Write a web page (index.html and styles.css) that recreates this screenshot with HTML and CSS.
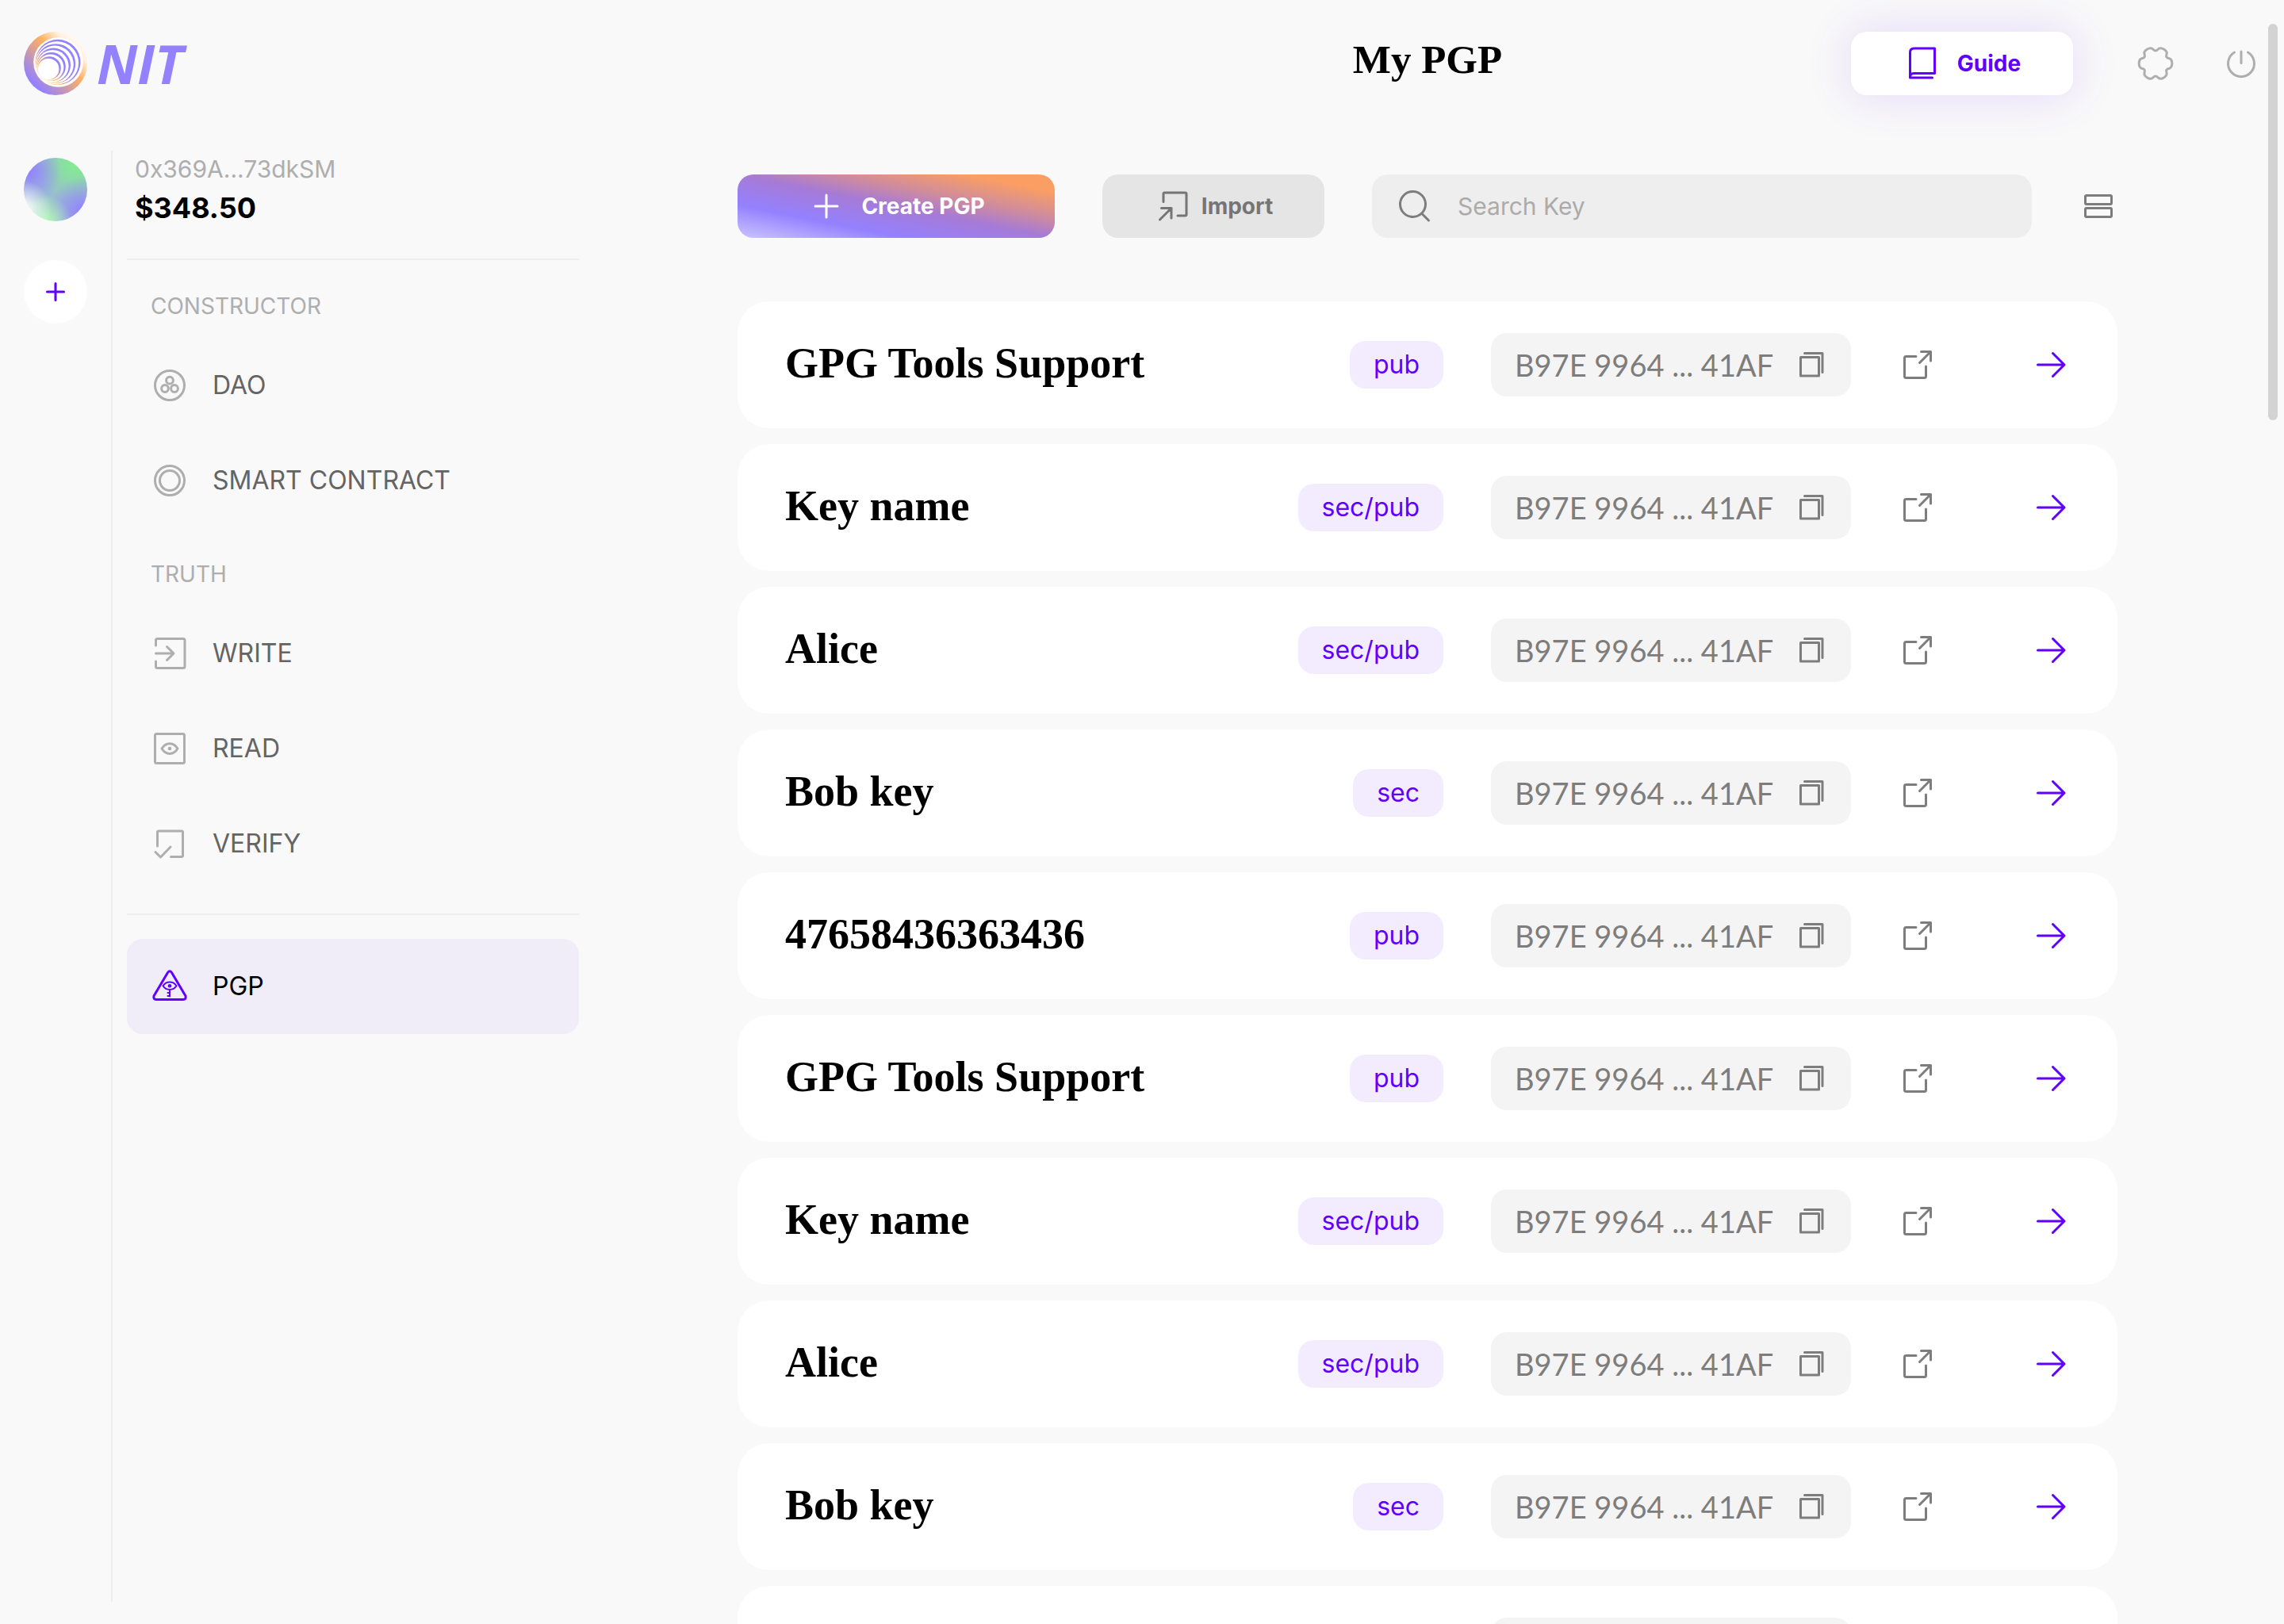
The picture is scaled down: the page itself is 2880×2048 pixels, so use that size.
FILE: index.html
```html
<!DOCTYPE html>
<html lang="en">
<head>
<meta charset="utf-8">
<meta name="viewport" content="width=device-width, initial-scale=1">
<title>My PGP</title>
<link rel="stylesheet" href="styles.css">
</head>
<body>
<svg class="sprite" aria-hidden="true">
  <symbol id="i-copy" viewBox="0 0 40 40"><path d="M6.500 10.500H29.500V34H6.500ZM11.500 5.500H34V29.500"/></symbol>
  <symbol id="i-open" viewBox="0 0 48 48"><path d="M22 13.500H9.500q-2 0-2 2V38.500q0 2 2 2H32.500q2 0 2-2V26M26.500 21.500L40.500 7.500M28.500 7.500H40.500V19"/></symbol>
  <symbol id="i-go" viewBox="0 0 48 48"><path d="M7.500 24H41M26.500 9.500L41 24L26.500 38.500"/></symbol>
</svg>
<div class="app">
  <header class="header">
    <a class="logo" href="#" aria-label="NIT home">
      <svg class="logo-mark" viewBox="0 0 80 80" aria-hidden="true">
        <defs>
          <linearGradient id="g-out" gradientUnits="userSpaceOnUse" x1="0" y1="80" x2="80" y2="0">
            <stop offset=".17" stop-color="#9381ff"/><stop offset=".58" stop-color="#ffb05f"/><stop offset=".76" stop-color="#fff1e2"/><stop offset=".85" stop-color="#fff8f1"/>
          </linearGradient>
          <linearGradient id="g-in" gradientUnits="userSpaceOnUse" x1="14" y1="66" x2="66" y2="14">
            <stop offset=".08" stop-color="#fff"/><stop offset=".28" stop-color="#ffb05f"/><stop offset=".52" stop-color="#9381ff"/>
          </linearGradient>
        </defs>
        <circle cx="40" cy="40" r="40" fill="url(#g-out)"/>
        <circle cx="43.500" cy="38.500" r="31.300" fill="#fff"/>
        <circle cx="43" cy="38.300" r="28.500" fill="url(#g-in)"/>
        <circle cx="42" cy="39.300" r="27.100" fill="#fff"/>
        <circle cx="40.200" cy="40.200" r="25" fill="url(#g-in)"/>
        <circle cx="39.200" cy="41.200" r="23.600" fill="#fff"/>
        <circle cx="37.500" cy="42.100" r="21.500" fill="url(#g-in)"/>
        <circle cx="36.500" cy="43.100" r="20.100" fill="#fff"/>
        <circle cx="34.800" cy="44" r="18" fill="url(#g-in)"/>
        <circle cx="33.800" cy="45" r="16.600" fill="#fff"/>
        <circle cx="32.200" cy="45.900" r="14.600" fill="url(#g-in)"/>
        <circle cx="31.200" cy="46.900" r="13.200" fill="#fff"/>
      </svg>
      <span class="logo-name">NIT</span>
    </a>
    <h1 class="title">My PGP</h1>
    <div class="actions">
      <button class="btn btn-guide" type="button">
        <svg class="icon" viewBox="0 0 48 48" aria-hidden="true"><path d="M8.500 42V10q0-5 5-5H39.500V36.500H13q-4.500 0-4.500 5M8.500 42H36.500"/></svg>
        Guide
      </button>
      <div class="tools">
        <button class="icon-btn muted" type="button" aria-label="Settings">
          <svg class="icon" viewBox="-24 -24 48 48" aria-hidden="true"><path d="M20.800 0Q20.800 5.600 16.700 6.500Q12.600 7.300 13.900 11.300Q15.200 15.200 10.400 18Q5.600 20.800 2.800 17.600Q0 14.500-2.800 17.600Q-5.600 20.800-10.400 18Q-15.200 15.200-13.900 11.300Q-12.600 7.300-16.700 6.500Q-20.800 5.600-20.800 0Q-20.800-5.600-16.700-6.500Q-12.600-7.300-13.900-11.300Q-15.200-15.200-10.400-18Q-5.600-20.800-2.800-17.600Q0-14.500 2.800-17.600Q5.600-20.800 10.400-18Q15.200-15.200 13.900-11.300Q12.600-7.300 16.700-6.500Q20.800-5.600 20.800 0Z"/></svg>
        </button>
        <button class="icon-btn muted" type="button" aria-label="Log out">
          <svg class="icon" viewBox="0 0 48 48" aria-hidden="true"><path d="M15.500 10A16.500 16.500 0 1 0 32.500 10M24 9V23.500"/></svg>
        </button>
      </div>
    </div>
  </header>

  <div class="body">
    <aside class="rail">
      <button class="avatar" type="button" aria-label="Current wallet"></button>
      <button class="add" type="button" aria-label="Add wallet">
        <svg class="icon" viewBox="0 0 48 48" aria-hidden="true"><path d="M24 13.500V34.500M13.500 24H34.500"/></svg>
      </button>
    </aside>

    <nav class="side" aria-label="Main">
      <div class="account">
        <div class="address">0x369A...73dkSM</div>
        <div class="balance">$348.50</div>
      </div>
      <section class="group">
        <h2 class="group-title">CONSTRUCTOR</h2>
        <a class="nav-item" href="#"><svg class="icon" viewBox="0 0 48 48" aria-hidden="true"><circle cx="24" cy="24" r="18.500"/><circle cx="24" cy="17.700" r="4.400"/><circle cx="18" cy="28" r="4.400"/><circle cx="30" cy="28" r="4.400"/></svg>DAO</a>
        <a class="nav-item" href="#"><svg class="icon" viewBox="0 0 48 48" aria-hidden="true"><circle cx="24" cy="24" r="18.500"/><circle cx="24" cy="24" r="12.500"/></svg>SMART CONTRACT</a>
      </section>
      <section class="group">
        <h2 class="group-title">TRUTH</h2>
        <a class="nav-item" href="#"><svg class="icon" viewBox="0 0 48 48" aria-hidden="true"><path d="M6.500 14V7.500q0-2 2-2H41q2 0 2 2V40.500q0 2-2 2H8.500q-2 0-2-2V34M6.500 24H28.500M20.500 15.500L29 24L20.500 32.500"/></svg>WRITE</a>
        <a class="nav-item" href="#"><svg class="icon" viewBox="0 0 48 48" aria-hidden="true"><rect x="5.500" y="5.500" width="37" height="37" rx="2"/><path d="M14 24C19 15.500 29 15.500 34 24C29 32.500 19 32.500 14 24Z"/><circle class="dot" cx="24" cy="24" r="2.300"/></svg>READ</a>
        <a class="nav-item" href="#"><svg class="icon" viewBox="0 0 48 48" aria-hidden="true"><path d="M8.500 27V9.500q0-1.500 1.500-1.500H39q1.500 0 1.500 1.500V39q0 1.500-1.500 1.500H25.500M6 34.500L12.500 41L25 28"/></svg>VERIFY</a>
      </section>
      <section class="group-last">
        <a class="nav-item active" href="#" aria-current="page"><svg class="icon" viewBox="0 0 48 48" aria-hidden="true"><path d="M21.500 6.500Q24 3 26.500 6.500L44 36Q45 40.500 41 40.500H7Q3 40.500 4 36Z"/><path class="thin" d="M15.500 23.300C19.500 17 28.500 17 32.500 23.300C28.500 29.600 19.500 29.600 15.500 23.300ZM24 28.500V36.500M24 32H21.500M24 36H21.500"/><circle class="dot" cx="24" cy="23.300" r="2.300"/></svg>PGP</a>
      </section>
    </nav>

    <main class="main">
      <div class="toolbar">
        <button class="btn btn-create" type="button">
          <svg class="icon" viewBox="0 0 48 48" aria-hidden="true"><path d="M24 10V38M10 24H38"/></svg>
          Create PGP
        </button>
        <button class="btn btn-import" type="button">
          <svg class="icon" viewBox="0 0 48 48" aria-hidden="true"><path d="M12 18.500V8.500q0-1.500 1.500-1.500H39.500q1.500 0 1.500 1.500V34.500q0 1.500-1.500 1.500H30M7.500 41L22 26.500M9.500 26.500H22V39"/></svg>
          Import
        </button>
        <label class="search">
          <svg class="icon" viewBox="0 0 48 48" aria-hidden="true"><circle cx="21.500" cy="21.500" r="16"/><path d="M33.500 34L41.500 42"/></svg>
          <input class="search-input" type="search" placeholder="Search Key" aria-label="Search Key">
        </label>
        <button class="icon-btn" type="button" aria-label="Change view">
          <svg class="icon" viewBox="0 0 48 48" aria-hidden="true"><rect x="7.500" y="10.500" width="33" height="11" rx="1.500"/><rect x="7.500" y="26.500" width="33" height="11" rx="1.500"/></svg>
        </button>
      </div>

      <ul class="keys">
        <li class="key"><h3 class="key-name">GPG Tools Support</h3><span class="tag">pub</span><button class="print" type="button">B97E 9964 ... 41AF<svg class="icon-sm" aria-hidden="true"><use href="#i-copy"/></svg></button><a class="open" href="#" aria-label="Open key"><svg class="icon" aria-hidden="true"><use href="#i-open"/></svg></a><a class="go" href="#" aria-label="Details"><svg class="icon" aria-hidden="true"><use href="#i-go"/></svg></a></li>
        <li class="key"><h3 class="key-name">Key name</h3><span class="tag">sec/pub</span><button class="print" type="button">B97E 9964 ... 41AF<svg class="icon-sm" aria-hidden="true"><use href="#i-copy"/></svg></button><a class="open" href="#" aria-label="Open key"><svg class="icon" aria-hidden="true"><use href="#i-open"/></svg></a><a class="go" href="#" aria-label="Details"><svg class="icon" aria-hidden="true"><use href="#i-go"/></svg></a></li>
        <li class="key"><h3 class="key-name">Alice</h3><span class="tag">sec/pub</span><button class="print" type="button">B97E 9964 ... 41AF<svg class="icon-sm" aria-hidden="true"><use href="#i-copy"/></svg></button><a class="open" href="#" aria-label="Open key"><svg class="icon" aria-hidden="true"><use href="#i-open"/></svg></a><a class="go" href="#" aria-label="Details"><svg class="icon" aria-hidden="true"><use href="#i-go"/></svg></a></li>
        <li class="key"><h3 class="key-name">Bob key</h3><span class="tag">sec</span><button class="print" type="button">B97E 9964 ... 41AF<svg class="icon-sm" aria-hidden="true"><use href="#i-copy"/></svg></button><a class="open" href="#" aria-label="Open key"><svg class="icon" aria-hidden="true"><use href="#i-open"/></svg></a><a class="go" href="#" aria-label="Details"><svg class="icon" aria-hidden="true"><use href="#i-go"/></svg></a></li>
        <li class="key"><h3 class="key-name">47658436363436</h3><span class="tag">pub</span><button class="print" type="button">B97E 9964 ... 41AF<svg class="icon-sm" aria-hidden="true"><use href="#i-copy"/></svg></button><a class="open" href="#" aria-label="Open key"><svg class="icon" aria-hidden="true"><use href="#i-open"/></svg></a><a class="go" href="#" aria-label="Details"><svg class="icon" aria-hidden="true"><use href="#i-go"/></svg></a></li>
        <li class="key"><h3 class="key-name">GPG Tools Support</h3><span class="tag">pub</span><button class="print" type="button">B97E 9964 ... 41AF<svg class="icon-sm" aria-hidden="true"><use href="#i-copy"/></svg></button><a class="open" href="#" aria-label="Open key"><svg class="icon" aria-hidden="true"><use href="#i-open"/></svg></a><a class="go" href="#" aria-label="Details"><svg class="icon" aria-hidden="true"><use href="#i-go"/></svg></a></li>
        <li class="key"><h3 class="key-name">Key name</h3><span class="tag">sec/pub</span><button class="print" type="button">B97E 9964 ... 41AF<svg class="icon-sm" aria-hidden="true"><use href="#i-copy"/></svg></button><a class="open" href="#" aria-label="Open key"><svg class="icon" aria-hidden="true"><use href="#i-open"/></svg></a><a class="go" href="#" aria-label="Details"><svg class="icon" aria-hidden="true"><use href="#i-go"/></svg></a></li>
        <li class="key"><h3 class="key-name">Alice</h3><span class="tag">sec/pub</span><button class="print" type="button">B97E 9964 ... 41AF<svg class="icon-sm" aria-hidden="true"><use href="#i-copy"/></svg></button><a class="open" href="#" aria-label="Open key"><svg class="icon" aria-hidden="true"><use href="#i-open"/></svg></a><a class="go" href="#" aria-label="Details"><svg class="icon" aria-hidden="true"><use href="#i-go"/></svg></a></li>
        <li class="key"><h3 class="key-name">Bob key</h3><span class="tag">sec</span><button class="print" type="button">B97E 9964 ... 41AF<svg class="icon-sm" aria-hidden="true"><use href="#i-copy"/></svg></button><a class="open" href="#" aria-label="Open key"><svg class="icon" aria-hidden="true"><use href="#i-open"/></svg></a><a class="go" href="#" aria-label="Details"><svg class="icon" aria-hidden="true"><use href="#i-go"/></svg></a></li>
        <li class="key"><h3 class="key-name">47658436363436</h3><span class="tag">pub</span><button class="print" type="button">B97E 9964 ... 41AF<svg class="icon-sm" aria-hidden="true"><use href="#i-copy"/></svg></button><a class="open" href="#" aria-label="Open key"><svg class="icon" aria-hidden="true"><use href="#i-open"/></svg></a><a class="go" href="#" aria-label="Details"><svg class="icon" aria-hidden="true"><use href="#i-go"/></svg></a></li>
      </ul>
    </main>
  </div>
</div>
<div class="scroll-thumb" aria-hidden="true"></div>
</body>
</html>
```
FILE: styles.css
```css
:root {
  --bg: #f9f9f9;
  --violet: #6100ff;
  --grey: #7d7d7d;
  --light: #aeaeae;
  --line: #eeeeee;
  --sans: Inter, "Liberation Sans", sans-serif;
  --serif: "Liberation Serif", serif;
}

* { box-sizing: border-box; }

body {
  margin: 0;
  background: var(--bg);
  color: #000;
  font: 400 32px/40px var(--sans);
}

h1, h2, h3, ul { margin: 0; padding: 0; }
a { color: inherit; text-decoration: none; }

button {
  border: 0;
  padding: 0;
  background: none;
  color: inherit;
  font: inherit;
  cursor: pointer;
}

.sprite { display: none; }

.icon, .icon-sm {
  flex: none;
  display: block;
  width: 48px;
  height: 48px;
  fill: none;
  stroke: currentColor;
  stroke-width: 3;
  stroke-linecap: round;
  stroke-linejoin: round;
}
.icon-sm { width: 40px; height: 40px; }
.icon .dot { fill: currentColor; stroke: none; }
.icon .thin { stroke-width: 2; }

.app {
  display: flex;
  flex-direction: column;
  height: 100vh;
}

/* header */
.header {
  flex: none;
  display: grid;
  grid-template-columns: 730px 1fr auto 1fr;
  align-items: center;
  height: 160px;
  padding-right: 10px;
}

.logo {
  display: flex;
  align-items: center;
  gap: 12px;
  padding-left: 30px;
}
.logo-mark { width: 80px; height: 80px; }
.logo-name {
  color: #9381ff;
  font: italic 700 68px/80px "Open Sans", sans-serif;
}

.title {
  grid-column: 3;
  padding-bottom: 10px;
  font: 700 51px/60px var(--serif);
}

.actions {
  display: flex;
  align-items: center;
  justify-content: flex-end;
  gap: 80px;
  padding-right: 20px;
}
.tools { display: flex; gap: 60px; }

.btn {
  flex: none;
  display: flex;
  align-items: center;
  justify-content: center;
  gap: 20px;
  width: 280px;
  height: 80px;
  border-radius: 20px;
  font-size: 28px;
  font-weight: 700;
}
.btn-guide {
  background: #fff;
  color: var(--violet);
  box-shadow: 0 0 60px rgba(97, 0, 255, 0.14);
}
.icon-btn { flex: none; color: var(--grey); }
.muted { color: var(--light); }

/* body */
.body {
  flex: 1;
  display: flex;
  align-items: stretch;
  min-height: 0;
}

.rail {
  flex: none;
  display: flex;
  flex-direction: column;
  gap: 49px;
  width: 142px;
  margin: 30px 0 28px;
  padding: 9px 0 0 30px;
  border-right: 2px solid var(--line);
}
.avatar, .add {
  width: 80px;
  height: 80px;
  border-radius: 50%;
}
.avatar {
  background:
    radial-gradient(circle at 0% 80%, #fff 0, rgba(255, 255, 255, 0) 34%),
    radial-gradient(circle at 34% 100%, #b4fab4 0, rgba(180, 250, 180, 0) 34%),
    radial-gradient(circle at 8% 22%, #9381ff 0, rgba(147, 129, 255, 0) 42%),
    radial-gradient(circle at 92% 84%, #9381ff 0, rgba(147, 129, 255, 0) 42%),
    radial-gradient(circle at 80% 10%, #82ee8c 0, rgba(130, 238, 140, 0) 48%),
    #99bfcf;
}
.add {
  display: flex;
  align-items: center;
  justify-content: center;
  background: #fff;
  color: var(--violet);
}

.side {
  flex: none;
  width: 570px;
  margin: 30px 0 0 18px;
}
.account {
  padding: 0 0 38px 10px;
  border-bottom: 2px solid var(--line);
}
.address { color: var(--light); font-size: 30px; line-height: 46px; }
.balance { font-size: 36px; font-weight: 700; line-height: 52px; }

.group { padding-top: 38px; }
.group-title {
  padding: 0 0 20px 30px;
  color: var(--light);
  font-size: 28px;
  font-weight: 400;
  line-height: 40px;
}
.group-last {
  margin-top: 28px;
  padding-top: 30px;
  border-top: 2px solid var(--line);
}
.nav-item {
  display: flex;
  align-items: center;
  gap: 30px;
  height: 120px;
  padding: 0 30px;
  border-radius: 20px;
  color: #646464;
}
.nav-item .icon { color: var(--light); }
.nav-item.active { background: #f0edf9; color: #000; }
.nav-item.active .icon { color: var(--violet); }

/* main */
.main {
  flex: 1;
  min-width: 0;
  overflow-y: auto;
  scrollbar-width: none;
  padding: 60px 210px 0 200px;
}
.toolbar {
  display: flex;
  align-items: center;
  gap: 60px;
  margin-bottom: 80px;
}
.btn-create {
  width: 400px;
  background: linear-gradient(to top right, #cac5ff 0%, #9481ff 26%, #a67ad6 50%, #d08c9c 66%, #fa9e64 86%);
  color: #fff;
}
.btn-import { gap: 12px; background: #e5e5e5; color: #757575; }

.search {
  flex: 1;
  display: flex;
  align-items: center;
  gap: 30px;
  height: 80px;
  padding: 0 30px;
  border-radius: 20px;
  background: #eeeeee;
  color: var(--grey);
}
.search-input {
  flex: 1;
  min-width: 0;
  border: 0;
  padding: 0;
  outline: 0;
  background: none;
  color: #000;
  font: 400 30px/40px var(--sans);
}
.search-input::placeholder { color: #ababab; opacity: 1; }

.keys {
  display: flex;
  flex-direction: column;
  gap: 20px;
  list-style: none;
}
.key {
  display: flex;
  align-items: center;
  height: 160px;
  padding: 0 60px;
  border-radius: 40px;
  background: #fff;
}
.key-name {
  flex: 1;
  min-width: 0;
  padding-bottom: 4px;
  font: 700 54px/60px var(--serif);
}
.tag {
  padding: 10px 30px;
  border-radius: 20px;
  background: #f3ecff;
  color: var(--violet);
}
.print {
  display: flex;
  align-items: center;
  justify-content: space-between;
  width: 454px;
  height: 80px;
  margin-left: 60px;
  padding: 0 30px;
  border-radius: 20px;
  background: #f4f4f4;
  color: var(--grey);
  font: 400 38px/48px Lato, sans-serif;
}
.open { margin-left: 60px; color: var(--grey); }
.go { margin-left: 120px; color: var(--violet); }

.scroll-thumb {
  position: fixed;
  top: 30px;
  right: 8px;
  width: 12px;
  height: 500px;
  border-radius: 6px;
  background: #d3d3d3;
}
```
